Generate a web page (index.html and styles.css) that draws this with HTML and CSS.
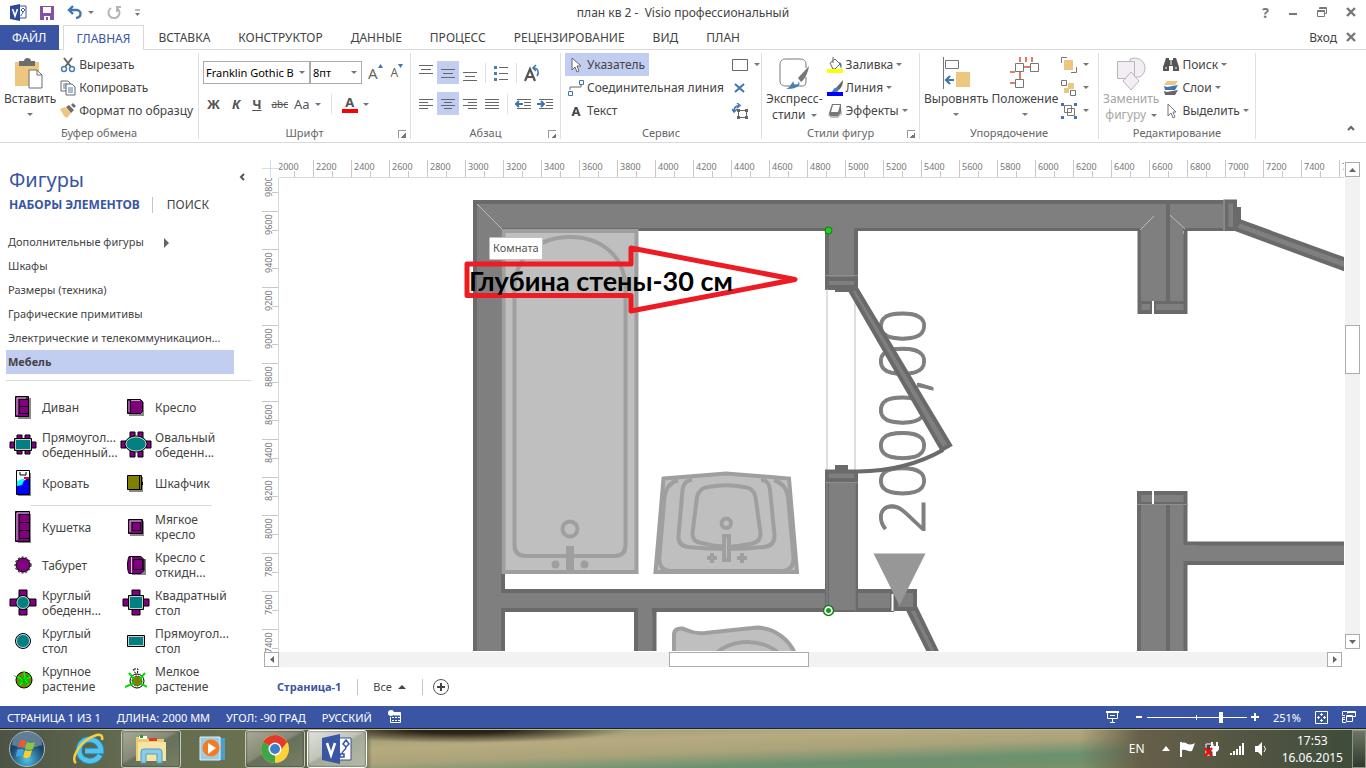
FILE: index.html
```html
<!DOCTYPE html>
<html lang="ru">
<head>
    <meta charset="UTF-8">
    <meta name="viewport" content="width=device-width, initial-scale=1.0">
    <title>план кв 2 - Visio профессиональный</title>
    <link rel="stylesheet" href="styles.css">
</head>
<body>
    <header class="titlebar">
        <div class="quick-access">
            <svg width="17" height="17" viewBox="0 0 17 17"><path d="M9 2h7v12H9z" fill="#fff" stroke="#3955a3"/><path d="M0 2l10-2v17L0 15z" fill="#2b4a9b"/><path d="M2.500 5l2.500 7 2.500-7" fill="none" stroke="#fff" stroke-width="1.600"/><path d="M13 4l2 2-2 2-2-2zM13 8c0 3-2 1-2 4" fill="none" stroke="#3955a3"/></svg>
            <button aria-label="Сохранить"><svg width="14" height="14"><path d="M1 1h12v12H1z" fill="#8650a6" stroke="#8650a6" stroke-width="2"/><path d="M3 1h8v6H3zM4 10h6v4H4z" fill="#fff"/><path d="M6 11h2v3H6z" fill="#8650a6"/></svg></button>
            <button aria-label="Отменить" class="arrow"><svg width="16" height="15" viewBox="0 0 16 15"><path d="M6 1L2 5l4 4M2 5h7c6 0 6 7 0 8" fill="none" stroke="#3f76b0" stroke-width="2.400"/></svg></button>
            <button aria-label="Повторить"><svg width="14" height="14" viewBox="0 0 14 14"><path d="M10 2a5.500 5.500 0 1 1-6 0M10 6V1h4" fill="none" stroke="#b5b5b5" stroke-width="2"/></svg></button>
            <button aria-label="Настройка панели"><svg width="7" height="7"><path d="M1 1h5" stroke="#777"/><path d="M1 4h5L3.500 7z" fill="#777"/></svg></button>
        </div>
        <h1>план кв 2 - &nbsp;Visio профессиональный</h1>
        <div class="window-buttons">
            <button class="help">?</button>
            <button aria-label="Свернуть"><svg width="10" height="10"><path d="M1 7h8" stroke="#777" stroke-width="2"/></svg></button>
            <button aria-label="Восстановить"><svg width="10" height="10"><path d="M2.500 2V.500h7v6H8M.500 3.500h7v6h-7zM1 4.500h7M3 1.500h6" fill="none" stroke="#777"/></svg></button>
            <button aria-label="Закрыть"><svg width="10" height="10"><path d="M1 1l8 8M9 1L1 9" stroke="#777" stroke-width="2.400"/></svg></button>
        </div>
    </header>

    <nav class="tabs">
        <button class="file">ФАЙЛ</button>
        <button class="active">ГЛАВНАЯ</button>
        <button>ВСТАВКА</button>
        <button>КОНСТРУКТОР</button>
        <button>ДАННЫЕ</button>
        <button>ПРОЦЕСС</button>
        <button>РЕЦЕНЗИРОВАНИЕ</button>
        <button>ВИД</button>
        <button>ПЛАН</button>
        <div class="login">
            <a href="#">Вход</a>
            <button aria-label="Закрыть окно"><svg width="10" height="10"><path d="M1 1l8 8M9 1L1 9" stroke="#777" stroke-width="2.400"/></svg></button>
        </div>
    </nav>

    <section class="ribbon">
        <div class="group clipboard">
            <div class="tools">
                <button class="big arrow-below">
                    <svg width="32" height="32" viewBox="0 0 32 32"><path d="M1 4h24v24H1z" fill="#edc77f"/><path d="M5 3h5c0-4 7-4 7 0h4v5H5z" fill="#6d6d6d"/><path d="M15 12h8l5 5v13H15z" fill="#fff" stroke="#6d6d6d"/><path d="M23 12v5h5" fill="none" stroke="#6d6d6d"/></svg>
                    Вставить
                </button>
                <div class="rows">
                    <button><svg width="16" height="16" viewBox="0 0 16 16"><path d="M4 1l7 9M12 1L5 10" stroke="#666" stroke-width="2"/><circle cx="4" cy="12" r="2.500" fill="none" stroke="#4a7fb5" stroke-width="1.500"/><circle cx="12" cy="12" r="2.500" fill="none" stroke="#4a7fb5" stroke-width="1.500"/></svg>Вырезать</button>
                    <button><svg width="16" height="16" viewBox="0 0 16 16"><path d="M1 1h7l2 2v8H1z" fill="#fff" stroke="#666"/><path d="M3 4h4M3 6h4M3 8h4" stroke="#4a7fb5"/><path d="M6 4h6l3 3v8H6z" fill="#fff" stroke="#666"/><path d="M8 8h5M8 10h5M8 12h5" stroke="#4a7fb5"/></svg>Копировать</button>
                    <button><svg width="16" height="16" viewBox="0 0 16 16"><path d="M0 6l5-2 6 6-4 5-3-2z" fill="#edc77f"/><path d="M6 4l3-2 5 5-3 3zM11 2l2-2 3 3-2 2z" fill="#6d6d6d"/></svg>Формат по образцу</button>
                </div>
            </div>
            <h2>Буфер обмена</h2>
        </div>

        <div class="group font">
            <div class="tools stack">
                <div class="line">
                    <label class="combo wide"><select aria-label="Шрифт"><option>Franklin Gothic B</option></select></label>
                    <label class="combo"><select aria-label="Размер"><option>8пт</option></select></label>
                    <button class="grow" aria-label="Увеличить шрифт">A<svg width="5" height="4"><path d="M0 4h5L2.500 0z" fill="#3f76b0"/></svg></button>
                    <button class="grow less" aria-label="Уменьшить шрифт">A<svg width="5" height="4"><path d="M0 0h5L2.500 4z" fill="#3f76b0"/></svg></button>
                </div>
                <div class="line letters">
                    <button><b>Ж</b></button>
                    <button><b><i>К</i></b></button>
                    <button><b><u>Ч</u></b></button>
                    <button class="strike"><s>abc</s></button>
                    <button class="arrow">Aa</button>
                    <span class="divider"></span>
                    <button class="arrow"><b class="color-letter">A</b></button>
                </div>
            </div>
            <h2 class="launcher">Шрифт</h2>
        </div>

        <div class="group paragraph">
            <div class="tools stack">
                <div class="line cells">
                    <button aria-label="По верхнему краю"><svg width="14" height="16"><path d="M0 .500h14M2 4.500h10M0 8.500h14" stroke="#666"/></svg></button>
                    <button class="on" aria-label="По середине"><svg width="14" height="16"><path d="M0 4.500h14M2 8.500h10M0 12.500h14" stroke="#666"/></svg></button>
                    <button aria-label="По нижнему краю"><svg width="14" height="16"><path d="M0 7.500h14M2 11.500h10M0 15.500h14" stroke="#666"/></svg></button>
                    <span class="divider"></span>
                    <button aria-label="Маркеры"><svg width="14" height="16"><path d="M5 2.500h9M5 8.500h9M5 14.500h9" stroke="#666"/><path d="M0 1h3v3H0zM0 7h3v3H0zM0 13h3v3H0z" fill="#4a7fb5"/></svg></button>
                    <span class="divider"></span>
                    <button aria-label="Повернуть текст"><svg width="16" height="18"><path d="M1 17L6 5l5 12M3 13h6" fill="none" stroke="#555" stroke-width="2.200"/><path d="M12 1L9 4l3 3M9 4c6 0 6 5 4 8" fill="none" stroke="#3f76b0" stroke-width="1.500"/></svg></button>
                </div>
                <div class="line cells">
                    <button aria-label="По левому краю"><svg width="14" height="12"><path d="M0 1.500h14M0 4.500h9M0 7.500h14M0 10.500h9" stroke="#666"/></svg></button>
                    <button class="on" aria-label="По центру"><svg width="14" height="12"><path d="M0 1.500h14M3 4.500h8M0 7.500h14M3 10.500h8" stroke="#666"/></svg></button>
                    <button aria-label="По правому краю"><svg width="14" height="12"><path d="M0 1.500h14M5 4.500h9M0 7.500h14M5 10.500h9" stroke="#666"/></svg></button>
                    <button aria-label="По ширине"><svg width="14" height="12"><path d="M0 1.500h14M0 4.500h14M0 7.500h14M0 10.500h14" stroke="#666"/></svg></button>
                    <span class="divider"></span>
                    <button aria-label="Уменьшить отступ"><svg width="16" height="12"><path d="M2 1.500h14M9 4.500h7M9 7.500h7M2 10.500h14" stroke="#666"/><path d="M8 6H2M4 3L1 6l3 3" fill="none" stroke="#3f76b0" stroke-width="2"/></svg></button>
                    <button aria-label="Увеличить отступ"><svg width="16" height="12"><path d="M2 1.500h14M9 4.500h7M9 7.500h7M2 10.500h14" stroke="#666"/><path d="M0 6h6M4 3l3 3-3 3" fill="none" stroke="#3f76b0" stroke-width="2"/></svg></button>
                </div>
            </div>
            <h2 class="launcher">Абзац</h2>
        </div>

        <div class="group service">
            <div class="tools">
                <div class="rows">
                    <button class="on"><svg width="16" height="16"><path d="M4 1v12l3-3 2 5 2-1-2-5h4z" fill="#fff" stroke="#666"/></svg>Указатель</button>
                    <button><svg width="16" height="16"><path d="M2 10V7h11V5" fill="none" stroke="#666"/><path d="M.500 11.500h4v4h-4zM11.500.500h4v4h-4z" fill="#fff" stroke="#3f76b0"/></svg>Соединительная линия</button>
                    <button><b class="text-icon">A</b>Текст</button>
                </div>
                <div class="rows icons">
                    <button class="arrow" aria-label="Прямоугольник"><svg width="16" height="12"><path d="M.500.500h15v11H.500z" fill="#fff" stroke="#666"/></svg></button>
                    <button aria-label="Удалить точку"><svg width="16" height="10"><path d="M3 1l9 8M12 1L3 9" stroke="#3f76b0" stroke-width="2"/></svg></button>
                    <button aria-label="Блок текста"><svg width="16" height="16"><path d="M5 0l3 2.500L5 5M8 2.500C3 2.500 2 5 2 8M0 6l2 3 3-3" fill="none" stroke="#3f76b0" stroke-width="1.500"/><path d="M6.500 7.500h8v7h-8z" fill="none" stroke="#666"/><path d="M5 6h3v3H5zM13 6h3v3h-3zM5 13h3v3H5zM13 13h3v3h-3z" fill="#666"/></svg></button>
                </div>
            </div>
            <h2>Сервис</h2>
        </div>

        <div class="group styles">
            <div class="tools">
                <button class="big">
                    <svg width="32" height="32" viewBox="0 0 32 32"><path d="M28 19v5c0 3-2 4-4 4H8c-4 0-6-2-6-5V7c0-4 2-6 6-6h14c4 0 6 2 6 6v3" fill="none" stroke="#777"/><path d="M31 8L20 20l3 4c4-3 7-9 8-16z" fill="#777"/><path d="M8 31c5-1 5-8 10-9 4 1 5 5 1 7-4 2-8 2-11 2z" fill="#4a7fb5"/><circle cx="18" cy="24" r="2.500" fill="#fff"/></svg>
                    <span>Экспресс-<br><span class="arrow">стили</span></span>
                </button>
                <div class="rows">
                    <button class="arrow"><svg width="16" height="16"><path d="M3 6l5-4 5 5-5 5H6zM6 0v6" fill="#fff" stroke="#666"/><path d="M12 5c3 1 3 4 2 7z" fill="#3f76b0"/><path d="M0 12h16v4H0z" fill="#ff0"/></svg>Заливка</button>
                    <button class="arrow"><svg width="16" height="16"><path d="M16 0L9 8l3 2c3-3 4-6 4-10z" fill="#666"/><path d="M4 12c3-1 2-5 6-4 3 2 1 4-1 4z" fill="#4a7fb5"/><path d="M0 12h16v4H0z" fill="#00f"/></svg>Линия</button>
                    <button class="arrow"><svg width="16" height="16"><path d="M6 3h8l1 8-4 4H4l-3-3z" fill="#bbb"/><path d="M5 1h9v8l-3 4H3l-1-3z" fill="#777"/><path d="M6 2h7l-2 7H4z" fill="#fff"/></svg>Эффекты</button>
                </div>
            </div>
            <h2 class="launcher">Стили фигур</h2>
        </div>

        <div class="group arrange">
            <div class="tools">
                <button class="big arrow-below">
                    <svg width="30" height="32"><path d="M2.500 0v32M4.500 3.500h13v8h-13z" fill="none" stroke="#777"/><path d="M15 15h14v15H15z" fill="#edc77f"/><path d="M13 23H6M9 19l-4 4 4 4" fill="none" stroke="#3f76b0" stroke-width="2.200"/></svg>
                    Выровнять
                </button>
                <button class="big arrow-below">
                    <svg width="30" height="32"><path d="M16 0v5M22 0v5M10 0v5M14 10h7M10 15v7M0 15h5M0 26h5" stroke="#d9532c" stroke-width="1.500"/><path d="M5.500 6.500h8v8h-8zM20.500 6.500h8v8h-8zM5.500 22.500h8v8h-8z" fill="#fff" stroke="#777"/></svg>
                    Положение
                </button>
                <div class="rows icons">
                    <button class="arrow" aria-label="На передний план"><svg width="16" height="16"><path d="M.500 6V.500H6M10 15.500h5.500V10" fill="none" stroke="#777"/><path d="M3 3h9v10H3z" fill="#edc77f"/></svg></button>
                    <button class="arrow" aria-label="На задний план"><svg width="16" height="16"><path d="M7 3h6v6H7zM3 8h5v5H3z" fill="#edc77f"/><path d="M.500.500h5v5h-5zM9.500 10.500h5v5h-5z" fill="#fff" stroke="#777"/></svg></button>
                    <button class="arrow" aria-label="Сгруппировать"><svg width="16" height="16"><path d="M3.500 2.500h7v7h-7zM6.500 5.500h7v7h-7z" fill="none" stroke="#777"/><path d="M0 0h3v3H0zM13 0h3v3h-3zM0 13h3v3H0zM13 13h3v3h-3z" fill="#3f76b0"/></svg></button>
                </div>
            </div>
            <h2>Упорядочение</h2>
        </div>

        <div class="group editing">
            <div class="tools">
                <button class="big" disabled>
                    <svg width="30" height="34"><path d="M14 2c8-3 15 2 15 9 0 4-2 7-5 9H14z" fill="#f2eef4" stroke="#b9b5bb"/><path d="M1.500 4.500h17v17h-17z" fill="#f2eef4" stroke="#b9b5bb"/><path d="M15 15l8 9-8 9-8-9z" fill="#f2eef4" stroke="#b9b5bb"/></svg>
                    <span>Заменить<br><span class="arrow">фигуру</span></span>
                </button>
                <div class="rows">
                    <button class="arrow"><svg width="16" height="16"><path d="M3 1h3v2h4V1h3l3 9v4h-6V9H6v5H0v-4z" fill="#555"/><path d="M2 11h2M12 11h2M8 3v5" stroke="#fff"/></svg>Поиск</button>
                    <button class="arrow"><svg width="16" height="16"><path d="M4 1h11l-3 4H1z" fill="#edc77f"/><path d="M1 6l3 1 11-2-3 5H2z" fill="#3f76b0"/><path d="M1 11l3 1 11-2-3 5H2z" fill="#666"/></svg>Слои</button>
                    <button class="arrow"><svg width="16" height="16"><path d="M5 1v12l3-3 2 5 2-1-2-5h3z" fill="#fff" stroke="#777"/></svg>Выделить</button>
                </div>
            </div>
            <h2>Редактирование</h2>
        </div>
        <button class="collapse" aria-label="Свернуть ленту"><svg width="8" height="6"><path d="M1 5l3-3 3 3" fill="none" stroke="#666" stroke-width="2"/></svg></button>
    </section>

    <main>
        <aside>
            <div class="aside-head">
                <h2>Фигуры</h2>
                <button aria-label="Свернуть панель"><svg width="6" height="8"><path d="M5 1L2 4l3 3" fill="none" stroke="#555" stroke-width="2"/></svg></button>
            </div>
            <div class="aside-tabs">
                <button class="active">НАБОРЫ ЭЛЕМЕНТОВ</button>
                <button>ПОИСК</button>
            </div>
            <ul class="stencils">
                <li class="more">Дополнительные фигуры</li>
                <li>Шкафы</li>
                <li>Размеры (техника)</li>
                <li>Графические примитивы</li>
                <li>Электрические и телекоммуникацион...</li>
                <li class="selected">Мебель</li>
            </ul>
            <div class="shapes">
                <div><svg width="18" height="24"><path d="M4 3h13v21H4z" fill="#888"/><path d="M1.500 1.500h13v20h-13z" fill="#800080" stroke="#000"/><path d="M3 3h9M3 3v17" stroke="#ccc"/><path d="M5.500 4.500h9v14h-9zM5.500 11.500h9" fill="none" stroke="#000"/></svg>Диван</div>
                <div><svg width="20" height="18"><path d="M3 4h15v14H3z" fill="#888"/><path d="M1.500 1.500h13l2 2v10l-2 2h-13z" fill="#800080" stroke="#000"/><path d="M4.500 2v13" stroke="#000"/><path d="M3 3v11M5 2.500h9" stroke="#aaa"/></svg>Кресло</div>
                <div><svg width="28" height="22"><path d="M8 1h5v4H8zM16 1h5v4h-5zM8 16h5v4H8zM16 16h5v4h-5zM1 8h5v6H1zM22 8h5v6h-5z" fill="#800080" stroke="#000"/><path d="M5.500 4.500h17v12h-17z" fill="#008080" stroke="#000"/><path d="M6.500 5.500h15v10h-15z" fill="none" stroke="#ccc"/></svg>Прямоугол...<br>обеденный...</div>
                <div><svg width="32" height="28"><path d="M10 1h5v7h-5zM18 1h5v7h-5zM10 20h5v6h-5zM18 20h5v6h-5zM1 10h5v7H1zM26 10h5v7h-5z" fill="#800080" stroke="#000"/><ellipse cx="16" cy="13" rx="11" ry="8" fill="#008080" stroke="#000"/><ellipse cx="16" cy="13" rx="10" ry="7" fill="none" stroke="#ccc"/></svg>Овальный<br>обеденн...</div>
                <div><svg width="16" height="26"><path d="M3 3h13v23H3z" fill="#888"/><path d="M1.500.500h13v24h-13z" fill="#fff" stroke="#000"/><path d="M2 16L14 7v17H2z" fill="#00f"/><path d="M2 11l8-3-3 7-5 1z" fill="#0ff"/><path d="M9 8h5" stroke="red" stroke-width="2"/><path d="M5 2v3h6V2" fill="none" stroke="#000"/></svg>Кровать</div>
                <div><svg width="20" height="18"><path d="M3 3h14v15H3z" fill="#888"/><path d="M1.500 1.500h14v14h-14z" fill="#808000" stroke="#000"/><path d="M13.500 2v14M16.500 8v3" stroke="#000"/></svg>Шкафчик</div>
            </div>
            <div class="shapes second">
                <div><svg width="18" height="32"><path d="M4 3h13v29H4z" fill="#888"/><path d="M1.500.500h14v30h-14z" fill="#800080" stroke="#000"/><path d="M3 2v27M3 2h12" stroke="#ccc"/><path d="M5.500 3.500h10v24h-10zM5.500 11.500h10M5.500 19.500h10" fill="none" stroke="#000"/></svg>Кушетка</div>
                <div><svg width="18" height="18"><path d="M3 3h14v15H3z" fill="#888"/><path d="M1.500 1.500h14v14h-14z" fill="#800080" stroke="#000"/><path d="M3 14V3h11" fill="none" stroke="#ccc"/><path d="M5.500 4.500h8v8h-8z" fill="none" stroke="#000"/></svg>Мягкое<br>кресло</div>
                <div><svg width="18" height="18"><circle cx="9" cy="9" r="7" fill="#800080" stroke="#000"/><circle cx="9" cy="9" r="8" fill="none" stroke="#000" stroke-dasharray="2 2"/></svg>Табурет</div>
                <div><svg width="20" height="20"><path d="M6 4h14v16H6z" fill="#888"/><path d="M3 1.500h12l3 3v11l-3 3H3c-2-4-2-12 0-17z" fill="#800080" stroke="#000"/><path d="M5.500 2v16" stroke="#ccc"/><path d="M7.500 4.500h9v10h-9z" fill="none" stroke="#000"/></svg>Кресло с<br>откидн...</div>
                <div><svg width="28" height="28"><path d="M10 1h8v7h-8zM10 20h8v6h-8zM1 10h7v7H1zM20 10h7v7h-7z" fill="#800080" stroke="#000"/><circle cx="14" cy="13.500" r="7" fill="#008080" stroke="#000"/><circle cx="14" cy="13.500" r="6" fill="none" stroke="#ccc"/></svg>Круглый<br>обеденн...</div>
                <div><svg width="28" height="28"><path d="M10 1h8v7h-8zM10 20h8v6h-8zM1 10h7v7H1zM20 10h7v7h-7z" fill="#800080" stroke="#000"/><path d="M6.500 6.500h15v14h-15z" fill="#008080" stroke="#000"/><path d="M7.500 7.500h13v12h-13z" fill="none" stroke="#ccc"/></svg>Квадратный<br>стол</div>
                <div><svg width="18" height="18"><circle cx="9" cy="9" r="7.500" fill="#008080" stroke="#000"/><circle cx="9" cy="9" r="6.500" fill="none" stroke="#ccc"/></svg>Круглый<br>стол</div>
                <div><svg width="20" height="14"><path d="M1.500 1.500h17v11h-17z" fill="#008080" stroke="#000"/><path d="M2.500 2.500h15v9h-15z" fill="none" stroke="#ccc"/></svg>Прямоугол...<br>стол</div>
                <div><svg width="22" height="22"><circle cx="12" cy="12" r="8" fill="#808000" stroke="#000"/><path d="M12 11L1 7l7 5-3 6 6-5 1 7 2-6 6 2-5-5 4-7-6 5-3-7z" fill="#00c000"/><path d="M12 3l1 8 6-2M6 9l6 3-4 5M13 12l3 5" fill="none" stroke="#0f0" stroke-width="1.500"/><path d="M8 8l7 8M16 8l-6 7" stroke="#063" stroke-dasharray="2 1"/></svg>Крупное<br>растение</div>
                <div><svg width="22" height="22"><path d="M12 8L8 1h5z" fill="#fff" stroke="#000" stroke-dasharray="2 1"/><circle cx="12" cy="13" r="7" fill="#fff" stroke="#000"/><circle cx="12" cy="13" r="5" fill="#808000" stroke="#060" stroke-dasharray="2 1"/><path d="M9 11L4 5M15 11l5-6M9 15l-9 4M15 15l7 4" stroke="#0d0" stroke-width="2"/></svg>Мелкое<br>растение</div>
            </div>
        </aside>

        <section class="workspace">
            <div class="corner"></div>
            <div class="ruler-top">
                <span>2000</span><span>2200</span><span>2400</span><span>2600</span><span>2800</span><span>3000</span><span>3200</span><span>3400</span><span>3600</span><span>3800</span><span>4000</span><span>4200</span><span>4400</span><span>4600</span><span>4800</span><span>5000</span><span>5200</span><span>5400</span><span>5600</span><span>5800</span><span>6000</span><span>6200</span><span>6400</span><span>6600</span><span>6800</span><span>7000</span><span>7200</span><span>7400</span><span>7600</span>
            </div>
            <div class="ruler-left">
                <span>9800</span><span>9600</span><span>9400</span><span>9200</span><span>9000</span><span>8800</span><span>8600</span><span>8400</span><span>8200</span><span>8000</span><span>7800</span><span>7600</span><span>7400</span>
            </div>
            <div class="canvas">
                <svg width="1065" height="473" viewBox="279 178 1065 473">
                    <!-- наружные стены -->
                    <g class="wall">
                        <path d="M475 202H1223V229H503V660H475z"/>
                        <path d="M1139.500 229V312H1152V303M1154 303V312H1185.500V229"/>
                        <path d="M1139 660V493H1185.500V660z"/>
                        <path d="M1187 543.500H1350V563H1187z"/>
                        <path d="M503 591H892V610H503z"/>
                        <path d="M636 612H654.500V660H636z"/>
                        <path d="M827 231H856V288H827zM827 472H856V610H827z"/>
                    </g>
                    <g class="wall-fill">
                        <path d="M477 204H1166V228H477zM477 204H501V651H477zM499 593H508V608H499zM638 606H652V651H638zM829 226H854V276H829zM829 483H854V610H829zM1141 220H1166V301H1141zM1170 204H1183V301H1170zM1170 204H1223V228H1170zM1170 545H1195V561H1170z"/>
                    </g>
                    <path d="M1166 202h4v100h-4zM1166 504h4v147h-4zM1139 301h47v3h-47zM1139 502h47v3h-47z" class="dark"/>
                    <path d="M1153 301v14M1153 491v13" class="gap"/>
                    <path d="M1137 504.500h51M825 275.500h33M825 482.500h33" class="seam"/>
                    <path d="M477 204l26 26M1140 230l14-14M1170 215l15 14M827 288v183M855 288v183" class="thin"/>
                    <path d="M827 483v128M855 483v128" stroke="#8a8a8a"/>

                    <!-- окно справа -->
                    <g class="wall">
                        <path d="M1226.500 201.500H1235V229H1226.500z"/>
                        <path d="M1236 209h3v9h-3z"/>
                        <path d="M1239 221L1360 265V275L1235 229z"/>
                    </g>
                    <path d="M1224 199v32" stroke="#a5a5a5"/>

                    <!-- ванна -->
                    <g class="fixture">
                        <path d="M503.500 231H636.500V572H503.500z"/>
                        <path d="M514.500 545V290C514.500 254 541 237 570 237S625.500 254 625.500 290V545Q625.500 556 614 556H526Q514.500 556 514.500 545z"/>
                        <circle cx="570" cy="529" r="7.500"/>
                        <path d="M568 548h4v24h-4z"/>
                        <circle cx="555.500" cy="564.500" r="2"/>
                        <circle cx="584.500" cy="564.500" r="2"/>
                    </g>

                    <!-- раковина -->
                    <g class="fixture">
                        <path d="M663.500 478.500L726 473.500 789 478.500 797 572H655.500z"/>
                        <path d="M678 480Q666 484 664.500 497L659.500 556Q658 570 670 571H783Q794 570 793.500 557L788 497Q786 484 774 480"/>
                        <path d="M692 480Q684 480 682.500 490L678.500 536Q678 546 688 547 726 551 764 547 775 546 774.500 535L770 490Q769 480 761 480"/>
                        <path d="M708 487Q726 483.500 744 487 754 488 755.500 497L760.500 533Q761 542 752 543.500 726 550 702 543 692 542 692.500 533L697 497Q699 488 708 487z"/>
                        <circle cx="726.300" cy="523.300" r="4.700"/>
                        <path d="M724 536h5v24h-5z"/>
                        <path d="M707 558h10M712 553v10M737 558h10M742 553v10"/>
                    </g>

                    <path class="fixture" d="M674 660V635Q674 628 682 628.500C690 631 692 634 705 633L752 628C774 625 793 642 797 660"/>
                    <path class="fixture" d="M711 660C725 636 770 636 784 660"/>

                    <!-- размер двери -->
                    <text class="dimension" transform="translate(925 534) rotate(-90)">2000,00</text>
                    <path d="M943 450Q906 471 858 471.500" fill="none" stroke="#6a6a6a" stroke-width="4"/>
                    <g class="wall">
                        <path d="M850 290.500L856 288 950 445 942 449.500z"/>
                        <path d="M827 279H856V287H827z"/>
                        <path d="M837 287h11v3h-11z"/>
                        <path d="M827 471.500H856V480H827z"/>
                        <path d="M837 467h9v4h-9z"/>
                        <path d="M908 610L915 606.500 941 660H933z"/>
                        <path d="M896 591H915V609H896z"/>
                    </g>
                    <path d="M892.500 594v17" class="gap"/>
                    <path d="M873.500 553.500h52l-26 52z" fill="#979797"/>
                    <circle cx="828.500" cy="230.500" r="3.500" fill="#1fd01f" stroke="#167816"/>
                    <circle cx="828.500" cy="610.500" r="5" fill="#fff" stroke="#167816" stroke-width="1.500"/>
                    <circle cx="828.500" cy="610.500" r="2.500" fill="#12a012"/>

                    <!-- подсказка и выноска -->
                    <rect x="489.500" y="237.500" width="53" height="22" rx="1" fill="#fff" stroke="#c0c0c0"/>
                    <text x="493" y="252" class="tip">Комната</text>
                    <path d="M467 264H631V248L795 279.500 631 311V295.500H467z" fill="none" stroke="#ed1c24" stroke-width="5" stroke-linejoin="round"/>
                    <text x="469" y="291" class="note">Глубина стены-30 см</text>
                </svg>
            </div>
            <div class="scroll-y">
                <button aria-label="Вверх"><svg width="7" height="4"><path d="M0 4h7L3.500 0z" fill="#666"/></svg></button>
                <div class="track"><div class="thumb"></div></div>
                <button aria-label="Вниз"><svg width="7" height="4"><path d="M0 0h7L3.500 4z" fill="#666"/></svg></button>
            </div>
            <div class="scroll-x">
                <button aria-label="Влево"><svg width="4" height="7"><path d="M4 0v7L0 3.500z" fill="#666"/></svg></button>
                <div class="track"><div class="thumb"></div></div>
                <button aria-label="Вправо"><svg width="4" height="7"><path d="M0 0v7l4-3.500z" fill="#666"/></svg></button>
            </div>
            <div class="pages">
                <button class="active">Страница-1</button>
                <button>Все <svg width="8" height="4"><path d="M0 4h8L4 0z" fill="#444"/></svg></button>
                <button aria-label="Добавить страницу"><svg width="16" height="16"><circle cx="8" cy="8" r="7.500" fill="none" stroke="#555"/><path d="M4 8h8M8 4v8" stroke="#444" stroke-width="2"/></svg></button>
            </div>
        </section>
    </main>

    <footer class="statusbar">
        <span>СТРАНИЦА 1 ИЗ 1</span>
        <span>ДЛИНА: 2000 ММ</span>
        <span>УГОЛ: -90 ГРАД</span>
        <span>РУССКИЙ</span>
        <svg width="13" height="14"><path d="M5 2.500h7.500v10h-10V7" fill="none" stroke="#fff"/><path d="M6 3h6v2H6zM4 7.500h2M7 7.500h2M10 7.500h2M4 10.500h2M7 10.500h2M10 10.500h2" fill="#fff" stroke="#fff"/><circle cx="3" cy="3" r="3" fill="#fff"/></svg>
        <div class="zoom">
            <svg width="13" height="12"><path d="M0 1h13" stroke="#fff" stroke-width="2"/><path d="M1.500 2v5.500h10V2M4 4.500h5M6.500 8v3M4 11.500h5" fill="none" stroke="#fff"/></svg>
            <button aria-label="Уменьшить"><svg width="8" height="8"><path d="M1 4h6" stroke="#fff" stroke-width="2"/></svg></button>
            <input type="range" min="0" max="100" value="75" aria-label="Масштаб">
            <button aria-label="Увеличить"><svg width="8" height="8"><path d="M0 4h8M4 0v8" stroke="#fff" stroke-width="2"/></svg></button>
            <span class="percent">251%</span>
            <svg width="13" height="13"><path d="M.500.500h12v12H.500zM6.500 2v3M6.500 8v3M2 6.500h3M8 6.500h3M5 3.500h3M5 9.500h3M3.500 5v3M9.500 5v3" fill="none" stroke="#fff"/></svg>
            <svg width="14" height="13"><path d="M5 .500H.500v4H3M5.500 2.500v-2h8v5h-3M4.500 4.500h6v6h-6zM4.500 5.500h6M3 6.500H.500v5H4M.500 8.500H3M6 1.500h7" fill="none" stroke="#fff"/></svg>
        </div>
    </footer>

    <div class="taskbar">
        <button class="start" aria-label="Пуск">
            <svg width="36" height="36" viewBox="0 0 36 36"><defs><radialGradient id="orb" cy=".8"><stop offset="0" stop-color="#4fc3e8"/><stop offset="1" stop-color="#1d4468"/></radialGradient></defs><circle cx="18" cy="18" r="17.500" fill="url(#orb)" stroke="#a9c0c8"/><path d="M3 14a15 13 0 0 1 30 0q-15 6-30 0z" fill="#fff" opacity=".3"/><path d="M11 10q3-2 6 0l-2 7q-3-2-6 0z" fill="#ee5a2c"/><path d="M18 11q4 2 8 0l-2 7q-4 2-8 0z" fill="#8cc63f"/><path d="M8 19q4-2 7 0l-2 7q-3-2-6 0z" fill="#3fa5e0"/><path d="M16 19q4 2 7 0l-2 7q-4 2-7 0z" fill="#fbcf2e"/></svg>
        </button>
        <button aria-label="Internet Explorer">
            <svg width="34" height="34" viewBox="0 0 34 34"><path d="M28 23c-4 9-21 8-21-5C7 4 29 4 29 19H13" fill="none" stroke="#2a8fc8" stroke-width="6.500"/><path d="M28 23c-4 9-21 8-21-5C7 4 29 4 29 19H13" fill="none" stroke="#52c4ee" stroke-width="4.500"/><path d="M4 31C-2 27 8 9 22 4c7-3 9 0 8 4" fill="none" stroke="#f6cf3c" stroke-width="2.500"/></svg>
        </button>
        <button class="open" aria-label="Проводник">
            <svg width="34" height="32" viewBox="0 0 34 32"><path d="M2 4h10l2 2h16v22H2z" fill="#e9cc76"/><path d="M5 3h8v3H5z" fill="#fff"/><path d="M6 2h3v3H6z" fill="#1ba32c"/><path d="M15 5h8v3h-8z" fill="#e03c2c"/><path d="M4 9h28v19H4z" fill="#f6e4a4"/><path d="M7 30V19q0-3 3-3h15q3 0 3 3v11h-5v-9H12v9z" fill="#8ccbe8" stroke="#4f9cc4"/></svg>
        </button>
        <button aria-label="Проигрыватель">
            <svg width="28" height="28" viewBox="0 0 28 28"><path d="M6 3h20v22H6z" fill="#4f9cc8"/><path d="M1 2h20v23H1z" fill="#9dcbe6" stroke="#e3f1f8"/><circle cx="12" cy="13" r="8.500" fill="#f47b20"/><path d="M9 8l8 5-8 6z" fill="#fff"/></svg>
        </button>
        <button class="open" aria-label="Chrome">
            <svg width="30" height="30" viewBox="0 0 30 30"><circle cx="15" cy="15" r="14" fill="#fdd33c"/><path d="M15 15L2.900 8a14 14 0 0 1 24.200 0z" fill="#e23b2e"/><path d="M15 15L2.900 8A14 14 0 0 0 15 29z" fill="#3fa648"/><path d="M15 8h12.100L21 16z" fill="#e23b2e"/><path d="M15 29l7-12-5-3z" fill="#fdd33c"/><circle cx="15" cy="15" r="6.500" fill="#fff"/><circle cx="15" cy="15" r="5" fill="#3f7fc8"/></svg>
        </button>
        <button class="open current" aria-label="Visio">
            <svg width="30" height="30" viewBox="0 0 30 30"><path d="M16 4h13v22H16z" fill="#fff" stroke="#3955a3"/><path d="M0 4l18-4v30L0 26z" fill="#3955a3"/><path d="M5 9l4 12 4-12" fill="none" stroke="#fff" stroke-width="2.500"/><path d="M24 6l3 4-3 3-3-3zM24 13c0 4-4 3-4 7M18 20h4v3h-4z" fill="none" stroke="#3955a3" stroke-width="1.500"/></svg>
        </button>
        <div class="tray">
            <span class="lang">EN</span>
            <svg width="8" height="5"><path d="M0 5h8L4 0z" fill="#fff"/></svg>
            <svg width="16" height="16"><path d="M2 1v15" stroke="#fff" stroke-width="2"/><path d="M3 2c4-2 5 3 11 1l2-1-3 8c-5 1-5-2-10-1z" fill="#fff"/></svg>
            <svg width="16" height="18"><path d="M2 4h7v11H2z" fill="#444" stroke="#fff"/><path d="M8 2v4M13 2v4" stroke="#fff" stroke-width="2"/><path d="M6 6h9v3q-1 3-3 3v4h-3v-4q-3-1-3-3z" fill="#fff"/><path d="M1 8l7 8M8 8l-7 8" stroke="#e81010" stroke-width="2.500"/></svg>
            <svg width="16" height="14"><path d="M1 11h2v2H1zM4 9h2v4H4zM7 7h2v6H7zM10 4h2v9h-2zM13 1h2v12h-2z" fill="#fff"/></svg>
            <svg width="14" height="16"><path d="M1 5h3l4-4v14l-4-4H1z" fill="#fff"/><path d="M10 5q3 3 0 6" fill="none" stroke="#fff"/></svg>
            <time datetime="2015-06-16T17:53">17:53<br>16.06.2015</time>
        </div>
        <button class="desktop" aria-label="Свернуть все окна"></button>
    </div>
</body>
</html>
```
FILE: styles.css
```css
:root {
    --blue: #3955a3;
    --select: #c2cef1;
    --text: #444;
    --line: #d9d9d9;
}

* {
    box-sizing: border-box;
    margin: 0;
    padding: 0;
    font-family: "Noto Sans", "Open Sans", sans-serif;
}

body {
    background: #fff;
    color: var(--text);
    font-size: 12px;
    height: 100vh;
    display: flex;
    flex-direction: column;
    overflow: hidden;
}

button {
    background: none;
    border: none;
    color: inherit;
    font-size: inherit;
    white-space: nowrap;
}

svg {
    flex: none;
}

ul {
    list-style: none;
}

h1, h2 {
    font-size: 12px;
    font-weight: normal;
}

.arrow::after,
.arrow-below::after {
    content: "";
    display: inline-block;
    flex: none;
    border: 3px solid transparent;
    border-top-color: #777;
    border-bottom: none;
    margin-left: 5px;
    vertical-align: middle;
}

.arrow-below::after {
    margin: 6px 0 0;
}

/* заголовок окна */
.titlebar {
    display: grid;
    grid-template-columns: 1fr auto 1fr;
    align-items: center;
    height: 25px;
    padding: 0 10px;
}

.quick-access {
    display: flex;
    align-items: center;
    gap: 13px;
}

.quick-access button {
    display: flex;
    align-items: center;
}

.window-buttons {
    display: flex;
    justify-content: flex-end;
    align-items: center;
    gap: 19px;
}

.help {
    font-size: 14px;
    font-weight: bold;
    color: #777;
}

/* вкладки ленты */
.tabs {
    display: flex;
    height: 25px;
    border-bottom: 1px solid var(--line);
}

.tabs > button {
    height: 25px;
    padding: 0 14px;
}

.tabs .file {
    background: var(--blue);
    color: #fff;
    padding: 0 12px;
    margin-right: 4px;
}

.tabs .active {
    background: #fff;
    border: 1px solid var(--line);
    border-bottom: none;
    color: var(--blue);
    padding: 0 13px;
}

.login {
    display: flex;
    align-items: center;
    gap: 9px;
    margin-left: auto;
    padding-right: 10px;
}

.login a {
    color: var(--text);
    text-decoration: none;
}

/* лента */
.ribbon {
    display: flex;
    height: 93px;
    padding: 3px 0;
    border-bottom: 1px solid var(--line);
}

.group {
    display: flex;
    flex-direction: column;
    border-right: 1px solid #e1e1e1;
    flex: none;
}

.clipboard { width: 199px; }
.font { width: 212px; }
.paragraph { width: 150px; }
.service { width: 201px; }
.styles { width: 158px; }
.arrange { width: 179px; }
.editing { width: 157px; }

.group h2 {
    color: #666;
    font-size: 11px;
    line-height: 12px;
    text-align: center;
    position: relative;
}

.launcher::after {
    content: "";
    position: absolute;
    right: 4px;
    top: 3px;
    width: 7px;
    height: 7px;
    border-left: 1px solid #999;
    border-top: 1px solid #999;
    background: linear-gradient(135deg, transparent 50%, #777 50%) 100% 100% / 5px 5px no-repeat;
}

.tools {
    display: flex;
    height: 74px;
    padding: 0 4px;
}

.stack {
    flex-direction: column;
    gap: 4px;
    padding-top: 7px;
}

.line {
    display: flex;
    align-items: center;
    height: 25px;
}

.big {
    display: flex;
    flex-direction: column;
    align-items: center;
    padding-top: 4px;
    line-height: 16px;
    color: var(--text);
}

.big > svg {
    height: 34px;
}

.big:disabled {
    color: #a6a6a6;
}

.rows {
    display: grid;
    grid-auto-rows: 23px;
    justify-items: start;
    margin-left: 4px;
}

.rows button {
    display: flex;
    align-items: center;
    gap: 3px;
    padding: 0 5px 0 0;
}

.rows .arrow::after,
.letters .arrow::after {
    margin-left: 0;
}

.icons {
    margin-left: auto;
}

.icons button {
    gap: 6px;
}

.on {
    background: var(--select);
}

.service .rows {
    margin-left: 0;
}

.service .rows button {
    padding-left: 3px;
}

.service .icons {
    margin-left: auto;
}

.service .rows .on {
    padding-right: 4px;
}

.arrange .tools {
    gap: 3px;
}

.text-icon {
    width: 16px;
    text-align: center;
    font-size: 13px;
}

.combo {
    position: relative;
    flex: none;
    width: 52px;
    height: 23px;
    margin-right: 6px;
}

.combo.wide {
    width: 107px;
    margin-right: 0;
}

.combo select {
    appearance: none;
    width: 100%;
    height: 100%;
    border: 1px solid #ababab;
    background: #fff;
    color: #000;
    font-size: 11px;
    padding-left: 2px;
}

.combo::after {
    content: "";
    position: absolute;
    right: 5px;
    top: 10px;
    border: 3px solid transparent;
    border-top-color: #777;
    border-bottom: none;
}

.grow {
    display: flex;
    align-items: flex-start;
    font-size: 15px;
    line-height: 18px;
    color: #666;
    margin-right: 8px;
}

.grow.less {
    font-size: 12px;
}

.letters {
    gap: 12px;
    padding-left: 4px;
    font-size: 13px;
    color: #555;
    height: 30px;
}

.letters .arrow {
    display: flex;
    align-items: center;
    gap: 5px;
}

.letters .strike {
    font-size: 10px;
    margin: 0 -6px 0 -2px;
}

.letters .divider {
    margin: 0 -2px;
}

.color-letter {
    border-bottom: 4px solid #f00;
    width: 16px;
    line-height: 14px;
}

.divider {
    width: 1px;
    height: 20px;
    background: #e1e1e1;
}

.cells button {
    width: 22px;
    height: 23px;
    display: flex;
    align-items: center;
    justify-content: center;
}

.cells .divider {
    margin: 0 4px;
}

.paragraph .stack {
    gap: 6px;
}

.collapse {
    margin: auto 11px 4px auto;
}

/* панель фигур */
main {
    display: flex;
    flex: 1;
    min-height: 0;
}

aside {
    width: 262px;
    padding: 22px 11px 0 6px;
}

.aside-head {
    display: flex;
    justify-content: space-between;
    padding: 0 6px 0 3px;
}

.aside-head h2 {
    color: var(--blue);
    font-size: 20px;
    line-height: 30px;
}

.aside-head button {
    height: 22px;
}

.aside-tabs {
    display: flex;
    line-height: 20px;
    padding-left: 3px;
}

.aside-tabs button + button {
    border-left: 1px solid #c5c5c5;
    margin: 2px 0 0 12px;
    padding-left: 14px;
    height: 16px;
    line-height: 16px;
}

.aside-tabs .active {
    color: var(--blue);
    font-weight: bold;
}

.stencils {
    padding: 17px 17px 6px 0;
    border-bottom: 1px solid var(--line);
    font-size: 11px;
    line-height: 24px;
    white-space: nowrap;
}

.stencils li {
    padding-left: 2px;
}

.stencils .selected {
    background: var(--select);
    font-weight: bold;
}

.more::after {
    content: "";
    display: inline-block;
    border: 5px solid transparent;
    border-left-color: #666;
    border-right: none;
    margin-left: 20px;
    vertical-align: middle;
}

.shapes {
    display: grid;
    grid-template-columns: 113px 113px;
    grid-auto-rows: 38px;
    padding: 7px 0 3px 2px;
    line-height: 15px;
}

.shapes div {
    position: relative;
    padding-left: 34px;
    align-self: center;
    white-space: nowrap;
}

.shapes svg {
    position: absolute;
    left: 15px;
    top: 50%;
    transform: translate(-50%, -50%);
}

.second {
    padding-top: 3px;
}

.second::before {
    content: "";
    position: absolute;
    width: 181px;
    margin: -3px 0 0 23px;
    border-top: 1px solid var(--line);
}

/* рабочая область */
.workspace {
    flex: 1;
    min-width: 0;
    display: grid;
    grid-template-columns: 17px 1fr 22px;
    grid-template-rows: 18px 1fr 15px 39px;
    padding-top: 17px;
}

.corner {
    background: linear-gradient(#d5dcf8, #d5dcf8) 8px 0 / 1px 100% no-repeat, linear-gradient(#d5dcf8, #d5dcf8) 0 8px / 100% 1px no-repeat;
}

.ruler-top,
.ruler-left {
    display: flex;
    overflow: hidden;
    color: #777;
    font-size: 9px;
}

.ruler-top {
    border-bottom: 1px solid var(--line);
}

.ruler-top span {
    flex: 0 0 38px;
    padding-left: 2px;
    line-height: 13px;
    border-left: 1px solid #c8c8c8;
    background: linear-gradient(#c8c8c8, #c8c8c8) 18px 100% / 1px 6px no-repeat;
}

.ruler-top span:first-child {
    margin-left: -4px;
}

.ruler-left {
    flex-direction: column;
    border-right: 1px solid var(--line);
}

.ruler-left span {
    flex: 0 0 38px;
    writing-mode: vertical-rl;
    transform: rotate(180deg);
    text-align: right;
    padding-bottom: 2px;
    line-height: 13px;
    border-bottom: 1px solid #c8c8c8;
    background: linear-gradient(#c8c8c8, #c8c8c8) 0 50% / 6px 1px no-repeat;
}

.ruler-left span:first-child {
    margin-top: -5px;
}

.canvas {
    overflow: hidden;
    min-height: 0;
}

.canvas svg {
    display: block;
}

.wall {
    fill: #7f7f7f;
    stroke: #6a6a6a;
    stroke-width: 4;
}

.wall-fill {
    fill: #7f7f7f;
}

.dark {
    fill: #6a6a6a;
}

.gap {
    stroke: #fff;
    stroke-width: 2;
}

.seam {
    stroke: #8f8f8f;
}

.thin {
    stroke: #bdbdbd;
    fill: none;
}

.fixture {
    fill: #bfbfbf;
    stroke: #9f9f9f;
    stroke-width: 4;
}

.dimension {
    font: 300 62px "Open Sans", sans-serif;
    fill: #7f7f7f;
    stroke: #7f7f7f;
}

.tip {
    font-size: 11px;
    fill: #555;
}

.note {
    font: bold 27px Lato, "Open Sans", sans-serif;
    fill: #000;
}

.scroll-y {
    grid-column: 3;
    grid-row: 1 / 3;
    width: 15px;
    margin: 2px 0 3px 1px;
    display: flex;
    flex-direction: column;
}

.scroll-x {
    grid-column: 1 / 3;
    margin: 0 2px;
    display: flex;
}

.scroll-y button,
.scroll-x button {
    flex: none;
    width: 15px;
    height: 15px;
    border: 1px solid #ababab;
    background: #fff;
    display: flex;
    align-items: center;
    justify-content: center;
}

.track {
    flex: 1;
    background: #f2f2f2;
    display: flex;
}

.thumb {
    background: #fff;
    border: 1px solid #ababab;
}

.scroll-y .track {
    flex-direction: column;
    padding-top: 148px;
}

.scroll-y .thumb {
    height: 49px;
}

.scroll-x .track {
    padding-left: 390px;
}

.scroll-x .thumb {
    width: 140px;
}

.pages {
    grid-column: 1 / 4;
    display: flex;
    align-items: center;
}

.pages button {
    display: flex;
    align-items: center;
    gap: 6px;
    font-size: 11px;
    height: 16px;
    padding: 0 16px 0 15px;
}

.pages button + button {
    border-left: 1px solid #c5c5c5;
}

.pages button:last-child {
    padding: 0 10px;
}

.pages .active {
    color: var(--blue);
    font-weight: bold;
}

/* строка состояния */
.statusbar {
    display: flex;
    align-items: center;
    gap: 16px;
    height: 22px;
    padding: 0 10px 0 7px;
    background: #3b55a5;
    color: #fff;
    font-size: 11px;
}

.zoom {
    display: flex;
    align-items: center;
    gap: 14px;
    margin-left: auto;
}

.zoom button {
    display: flex;
    margin: 0 -10px 0 2px;
}

.zoom button + input + button {
    margin: 0 0 0 -10px;
}

.zoom input {
    appearance: none;
    width: 100px;
    height: 12px;
    background: linear-gradient(#fff, #fff) 50% 50% / 1px 5px no-repeat, linear-gradient(#fff, #fff) 0 50% / 100% 1px no-repeat;
}

.zoom input::-webkit-slider-thumb {
    appearance: none;
    width: 4px;
    height: 11px;
    background: #fff;
}

/* панель задач */
.taskbar {
    display: flex;
    align-items: center;
    gap: 2px;
    height: 40px;
    border-top: 1px solid #222;
    box-shadow: inset 0 1px #b5b7a3;
    color: #fff;
    background:
        linear-gradient(90deg, #4d5344 0, #626a4f 120px, #69714f 250px, #51583f 362px, transparent 372px),
        radial-gradient(ellipse 170px 14px at 460px 0, #2b2117 30%, transparent),
        linear-gradient(90deg, transparent 1080px, #665f49 1140px, #3c4b3a 1366px),
        linear-gradient(178deg, #8b9468 10%, #b7aa80 38%, #aaa37a 55%, #6c916f 72%, #71906b 82%, #8d966b 100%);
}

.taskbar button {
    display: flex;
    align-items: center;
    justify-content: center;
    width: 60px;
    height: 38px;
}

.taskbar .start {
    width: 54px;
    margin-right: 3px;
}

.taskbar .open {
    border: 1px solid #c5c8b9;
    border-radius: 3px;
    box-shadow: inset 0 0 2px #222;
    background: linear-gradient(150deg, #a8aa98 0, #858a75 45%, #66705a 50%, #768166 100%);
}

.taskbar .current {
    border-color: #fff;
    background: linear-gradient(150deg, #e1e2dc 0, #c1c5b8 45%, #a5ab99 50%, #b4baa6 100%);
}

.tray {
    display: flex;
    align-items: center;
    gap: 9px;
    margin-left: auto;
    padding-right: 7px;
}

.lang {
    margin-right: 8px;
}

.tray time {
    line-height: 17px;
    text-align: center;
    margin-left: 5px;
}

.taskbar .desktop {
    width: 14px;
    border: 1px solid #8d9484;
    background: linear-gradient(#6d7565, #2f3a2f);
}
```
